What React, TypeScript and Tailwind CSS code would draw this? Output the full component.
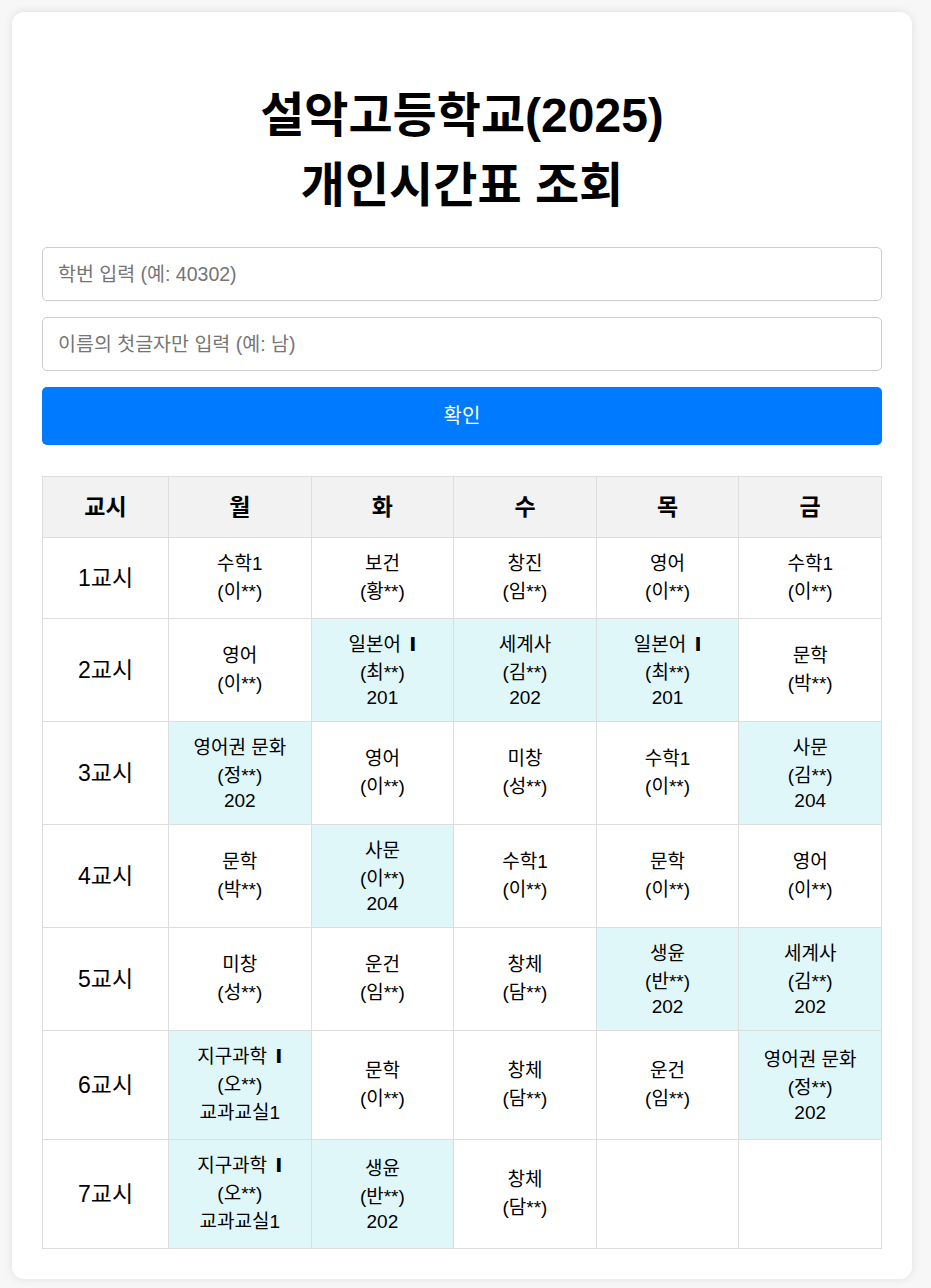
import React from "react"

type Cell = { s: string; t: string; r?: string } | null

const days = ["월", "화", "수", "목", "금"]

const rows: Cell[][] = [
  [
    { s: "수학1", t: "(이**)" },
    { s: "보건", t: "(황**)" },
    { s: "창진", t: "(임**)" },
    { s: "영어", t: "(이**)" },
    { s: "수학1", t: "(이**)" },
  ],
  [
    { s: "영어", t: "(이**)" },
    { s: "일본어 Ⅰ", t: "(최**)", r: "201" },
    { s: "세계사", t: "(김**)", r: "202" },
    { s: "일본어 Ⅰ", t: "(최**)", r: "201" },
    { s: "문학", t: "(박**)" },
  ],
  [
    { s: "영어권 문화", t: "(정**)", r: "202" },
    { s: "영어", t: "(이**)" },
    { s: "미창", t: "(성**)" },
    { s: "수학1", t: "(이**)" },
    { s: "사문", t: "(김**)", r: "204" },
  ],
  [
    { s: "문학", t: "(박**)" },
    { s: "사문", t: "(이**)", r: "204" },
    { s: "수학1", t: "(이**)" },
    { s: "문학", t: "(이**)" },
    { s: "영어", t: "(이**)" },
  ],
  [
    { s: "미창", t: "(성**)" },
    { s: "운건", t: "(임**)" },
    { s: "창체", t: "(담**)" },
    { s: "생윤", t: "(반**)", r: "202" },
    { s: "세계사", t: "(김**)", r: "202" },
  ],
  [
    { s: "지구과학 Ⅰ", t: "(오**)", r: "교과교실1" },
    { s: "문학", t: "(이**)" },
    { s: "창체", t: "(담**)" },
    { s: "운건", t: "(임**)" },
    { s: "영어권 문화", t: "(정**)", r: "202" },
  ],
  [
    { s: "지구과학 Ⅰ", t: "(오**)", r: "교과교실1" },
    { s: "생윤", t: "(반**)", r: "202" },
    { s: "창체", t: "(담**)" },
    null,
    null,
  ],
]

const font = "font-['Liberation_Sans','Noto_Sans_CJK_KR',sans-serif]"

// roman numeral drawn from DejaVu so it stays narrow like the reference
const Subject = ({ text }: { text: string }) => {
  if (!text.endsWith("Ⅰ")) return <>{text}</>
  return (
    <>
      {text.slice(0, -1)}
      <span className="ml-[3px] font-['DejaVu_Sans',sans-serif] font-bold leading-none">Ⅰ</span>
    </>
  )
}

const SubjectCell = ({ cell }: { cell: Cell }) => {
  if (!cell) return <td className="border border-[#dddddd] bg-white"></td>
  return (
    <td className={`border border-[#dddddd] py-[12px] text-center align-middle ${cell.r ? "bg-[#e0f7fa]" : "bg-white"}`}>
      <div className="h-[28px] leading-[28px]">
        <Subject text={cell.s} />
      </div>
      <div className="leading-[28px]">{cell.t}</div>
      {cell.r ? (
        <div className={/^\d+$/.test(cell.r) ? "leading-[22px]" : "leading-[28px]"}>{cell.r}</div>
      ) : null}
    </td>
  )
}

export default function App() {
  return (
    <div className={`min-h-[1288px] bg-[#f7f7f7] pl-3 pt-3 pb-[10px] text-black text-[19px] ${font}`}>
      <div className="w-[900px] rounded-xl bg-white p-[30px] shadow-[0_0_10px_rgba(0,0,0,0.1)]">
        <h1 className="mt-[39px] mb-[26px] text-center text-[48px] font-bold leading-[70px]">
          설악고등학교(2025)
          <br />
          개인시간표 조회
        </h1>
        <div className="flex flex-col gap-4">
          <input
            className="h-[54px] w-full rounded-[5px] border border-[#cccccc] px-[15px] text-[19.5px] outline-none placeholder:text-[#757575]"
            placeholder="학번 입력 (예: 40302)"
          />
          <input
            className="h-[54px] w-full rounded-[5px] border border-[#cccccc] px-[15px] text-[19.5px] outline-none placeholder:text-[#757575]"
            placeholder="이름의 첫글자만 입력 (예: 남)"
          />
          <button className="h-[58px] w-full rounded-[5px] bg-[#007bff] text-[20px] text-white">확인</button>
        </div>
        <table className="mt-[31px] w-full table-fixed border-collapse">
          <colgroup>
            <col className="w-[126px]" />
            <col />
            <col />
            <col />
            <col />
            <col />
          </colgroup>
          <thead>
            <tr>
              <th className="border border-[#dddddd] bg-[#f2f2f2] py-[12px] text-[23px] font-bold leading-[36px]">교시</th>
              {days.map((d) => (
                <th key={d} className="border border-[#dddddd] bg-[#f2f2f2] py-[12px] text-[23px] font-bold leading-[36px]">
                  {d}
                </th>
              ))}
            </tr>
          </thead>
          <tbody>
            {rows.map((row, i) => (
              <tr key={i}>
                <td className="border border-[#dddddd] bg-white text-center text-[23px]">{i + 1}교시</td>
                {row.map((cell, j) => (
                  <SubjectCell key={j} cell={cell} />
                ))}
              </tr>
            ))}
          </tbody>
        </table>
      </div>
    </div>
  )
}
